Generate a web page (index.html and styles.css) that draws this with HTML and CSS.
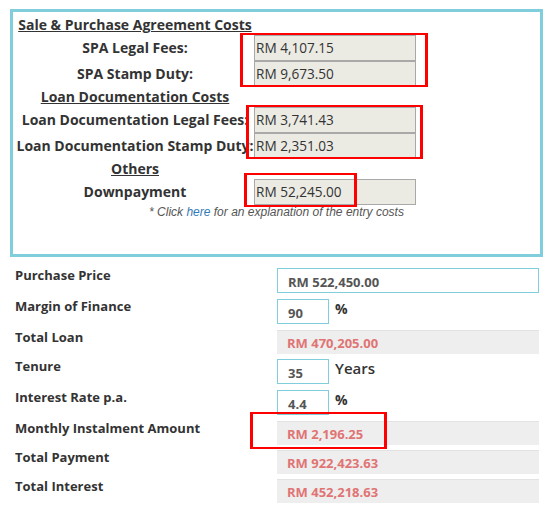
FILE: index.html
```html
<!DOCTYPE html>
<html>
<head>
<meta charset="utf-8">
<link rel="stylesheet" href="styles.css">
</head>
<body>
<div class="page">
  <div class="costs">
    <div class="cost-head first"><span>Sale &amp; Purchase Agreement Costs</span></div>
    <div class="cost-row"><div class="cost-label">SPA Legal Fees:</div><div class="cost-input">RM 4,107.15</div></div>
    <div class="cost-row"><div class="cost-label">SPA Stamp Duty:</div><div class="cost-input">RM 9,673.50</div></div>
    <div class="cost-head"><span>Loan Documentation Costs</span></div>
    <div class="cost-row"><div class="cost-label">Loan Documentation Legal Fees:</div><div class="cost-input">RM 3,741.43</div></div>
    <div class="cost-row"><div class="cost-label">Loan Documentation Stamp Duty:</div><div class="cost-input">RM 2,351.03</div></div>
    <div class="cost-head"><span>Others</span></div>
    <div class="cost-row"><div class="cost-label">Downpayment</div><div class="cost-input">RM 52,245.00</div></div>
    <div class="note">* Click <a href="#">here</a> for an explanation of the entry costs</div>
  </div>

  <div class="calc">
    <div class="row r31"><div class="label">Purchase Price</div><div class="field"><div class="box edit wide">RM 522,450.00</div></div></div>
    <div class="row r31"><div class="label">Margin of Finance</div><div class="field"><div class="box edit small">90</div><span class="unit pct">%</span></div></div>
    <div class="row r29"><div class="label">Total Loan</div><div class="field"><div class="box result">RM 470,205.00</div></div></div>
    <div class="row r31"><div class="label">Tenure</div><div class="field"><div class="box edit small">35</div><span class="unit years">Years</span></div></div>
    <div class="row r31"><div class="label">Interest Rate p.a.</div><div class="field"><div class="box edit small">4.4</div><span class="unit pct">%</span></div></div>
    <div class="row r29"><div class="label">Monthly Instalment Amount</div><div class="field"><div class="box result">RM 2,196.25</div></div></div>
    <div class="row r29"><div class="label">Total Payment</div><div class="field"><div class="box result">RM 922,423.63</div></div></div>
    <div class="row r29"><div class="label">Total Interest</div><div class="field"><div class="box result">RM 452,218.63</div></div></div>
  </div>

  <div class="mark m1"></div>
  <div class="mark m2"></div>
  <div class="mark m3"></div>
  <div class="mark m4"></div>
</div>
</body>
</html>
```
FILE: styles.css
```css
* { box-sizing: border-box; }
body {
  margin: 0;
  font-family: "Open Sans", "Liberation Sans", sans-serif;
  color: #333;
  background: #fff;
}
.page {
  position: relative;
  width: 548px;
  height: 511px;
  padding: 9px 0 0 10px;
}
.costs {
  width: 533px;
  height: 248px;
  border: 3px solid #80cedc;
}
.cost-head {
  width: 238px;
  margin-left: 3px;
  height: 20px;
  line-height: 20px;
  text-align: center;
  font-weight: 700;
  font-size: 14px;
}
.cost-head.first {
  height: 23px;
  padding-top: 3px;
}
.cost-head span { text-decoration: underline; }
.cost-row {
  display: flex;
  margin-left: 3px;
  height: 26px;
}
.cost-label {
  width: 238px;
  text-align: center;
  line-height: 26px;
  font-weight: 700;
  font-size: 14px;
  white-space: nowrap;
}
.cost-input {
  width: 162px;
  height: 26px;
  background: #ebebe4;
  border: 1px solid #a9a9a9;
  font-size: 13.6px;
  line-height: 24px;
  padding-left: 1px;
  color: #333;
}
.note {
  text-align: center;
  font-family: "Liberation Sans", Arial, sans-serif;
  font-style: italic;
  font-size: 12px;
  line-height: 14px;
  color: #555;
}
.note a { color: #337ab7; text-decoration: none; }

.calc {
  margin-top: 11px;
  padding-left: 5px;
}
.row {
  display: grid;
  grid-template-columns: 262px 262px;
  align-items: start;
}
.r31 { height: 31px; }
.r29 { height: 29px; }
.label {
  font-weight: 700;
  font-size: 13px;
  line-height: 14px;
  color: #333;
}
.field {
  display: flex;
  align-items: flex-start;
}
.box {
  font-weight: 700;
  font-size: 13px;
  padding-left: 10px;
}
.edit {
  height: 25px;
  line-height: 25px;
  border: 1px solid #80cedc;
  color: #555;
  padding-top: 1px;
}
.wide { width: 262px; }
.small { width: 52px; }
.result {
  width: 262px;
  height: 24px;
  line-height: 24px;
  background: #eee;
  border-top: 1px solid #e2e2e2;
  color: #e07474;
}
.unit {
  font-weight: 700;
  color: #333;
  margin-left: 6px;
}
.pct { font-size: 14px; line-height: 20px; }
.years { font-size: 15px; line-height: 18px; font-weight: 600; }

.mark {
  position: absolute;
  border-style: solid;
  border-color: #f00;
  border-width: 2px 3px;
}
.m1 { left: 240px; top: 33px; width: 188px; height: 54px; }
.m2 { left: 246px; top: 105px; width: 177px; height: 54px; }
.m3 { left: 244px; top: 173px; width: 113px; height: 34px; }
.m4 { left: 250px; top: 412px; width: 137px; height: 37px; }
```
